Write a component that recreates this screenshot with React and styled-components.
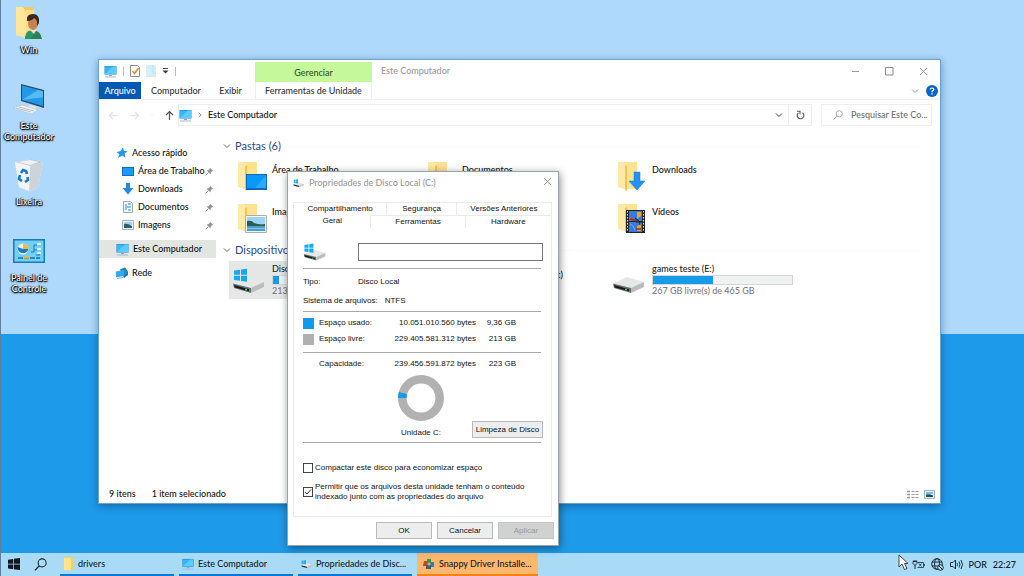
import React from 'react';
import styled, { createGlobalStyle, css } from 'styled-components';

const GlobalStyle = createGlobalStyle`
  * {
    box-sizing: border-box;
  }

  body {
    margin: 0;
    font-family: Lato, 'Noto Sans', sans-serif;
    font-size: 9px;
    font-weight: 500;
    line-height: 12px;
    color: #111;
  }

  button, input {
    font: inherit;
    color: inherit;
    margin: 0;
  }

  button {
    padding: 0;
    border: none;
    background: none;
  }

  a {
    color: inherit;
    text-decoration: none;
  }

  svg {
    display: block;
    flex: none;
  }
`;

const Screen = styled.div`
  position: relative;
  min-height: 100vh;
  display: flex;
  flex-direction: column;
  overflow: hidden;
  background: linear-gradient(#afd8fd 58%, #1e9aea 58%);
  border-left: 1px solid #5f7f9c;
`;

const DesktopIcons = styled.nav`
  flex: 1;
  display: flex;
  flex-direction: column;
  width: 56px;
  padding-top: 5px;
`;

const DesktopItem = styled.a`
  height: 76px;
  display: flex;
  flex-direction: column;
  align-items: center;
  gap: 3px;
  color: #fff;
  font-size: 9px;
  font-weight: 500;
  line-height: 11px;
  text-align: center;
  text-shadow: 0 0 1px #000, 1px 1px 1px #000, -1px 0 1px #222, 0 1px 2px #000;
`;

const DesktopPicture = styled.span`
  height: 36px;
  display: flex;
  align-items: center;
`;

/* ---------- explorer window ---------- */

const Explorer = styled.main`
  position: absolute;
  top: 59px;
  left: 97px;
  right: 83px;
  bottom: 72px;
  display: flex;
  flex-direction: column;
  background: #fff;
  border: 1px solid #6aa3cf;
  box-shadow: 0 2px 8px rgba(0, 30, 70, 0.4);
`;

const TitleBar = styled.header`
  height: 22px;
  display: flex;
  align-items: center;
  color: #999;
`;

const QuickAccess = styled.div`
  width: 156px;
  display: flex;
  align-items: center;
  gap: 6px;
  padding-left: 5px;
`;

const Divider = styled.span`
  width: 1px;
  height: 9px;
  background: #bbb;
`;

const ContextTab = styled.div`
  width: 117px;
  height: 20px;
  align-self: flex-end;
  margin-right: 9px;
  background: #c5f79b;
  color: #31502a;
  line-height: 22px;
  text-align: center;
`;

const WindowTitle = styled.span`
  flex: 1;
`;

const WindowButton = styled.button`
  width: 34px;
  height: 22px;
  display: flex;
  align-items: center;
  justify-content: center;
`;

const RibbonTabs = styled.nav`
  height: 18px;
  display: flex;
  border-bottom: 1px solid #eef0f1;
`;

const RibbonTab = styled.a`
  width: ${props => props.$width}px;
  line-height: 18px;
  text-align: center;
  color: #333;

  ${props => props.$file && css`
    margin-right: 5px;
    height: 17px;
    background: #0058b5;
    color: #fff;
  `}

  ${props => props.$context && css`
    border: solid #eee;
    border-width: 0 1px;
  `}
`;

const RibbonTools = styled.div`
  flex: 1;
  display: flex;
  align-items: center;
  justify-content: flex-end;
  gap: 7px;
  padding-right: 2px;
`;

const AddressRow = styled.div`
  height: 30px;
  display: flex;
  align-items: center;
  padding-right: 8px;
`;

const History = styled.div`
  width: 79px;
  display: flex;
  align-items: center;
  gap: 10px;
  padding-left: 9px;
`;

const AddressBox = styled.div`
  flex: 1;
  height: 22px;
  display: flex;
  align-items: center;
  gap: 5px;
  border: 1px solid #eee;
`;

const AddressText = styled.span`
  flex: 1;
`;

const RefreshButton = styled.button`
  width: 23px;
  height: 20px;
  display: flex;
  align-items: center;
  justify-content: center;
  border-left: 1px solid #eee;
`;

const SearchBox = styled.label`
  width: 111px;
  height: 22px;
  margin-left: 9px;
  display: flex;
  align-items: center;
  gap: 8px;
  padding-left: 11px;
  border: 1px solid #eee;

  input {
    flex: 1;
    min-width: 0;
    padding: 0;
    border: none;
    outline: none;
    background: none;
  }

  input::placeholder {
    color: #707070;
    opacity: 1;
  }
`;

const Body = styled.div`
  flex: 1;
  display: flex;
`;

const SidePane = styled.nav`
  width: 117px;
  padding-top: 14px;
`;

const SideItem = styled.a`
  height: 18px;
  display: flex;
  align-items: center;
  gap: 4px;
  padding-left: ${props => (props.$nested ? 23 : 17)}px;
  margin-top: ${props => (props.$section ? 6 : 0)}px;
  background: ${props => (props.$active ? '#e3e5e3' : 'transparent')};
  white-space: nowrap;
`;

const SideLabel = styled.span`
  width: 63px;
`;

const Content = styled.section`
  flex: 1;
  min-width: 0;
  padding: 7px 20px 0 7px;
`;

const GroupTitle = styled.h2`
  height: 18px;
  margin: 0;
  display: flex;
  align-items: center;
  gap: 4px;
  color: #2b4a86;
  font-size: 11px;
  font-weight: 400;

  &::after {
    content: '';
    flex: 1;
    height: 1px;
    margin-left: 4px;
    background: #f9fafa;
  }
`;

const TileGrid = styled.div`
  display: grid;
  grid-template-columns: repeat(auto-fill, 190px);
  grid-auto-rows: 42px;
  margin: 2px 0 0 6px;
`;

const Tile = styled.a`
  display: flex;
  gap: 4px;
  padding: ${props => (props.$drive ? '2px 0 0 3px' : '4px 0 0 8px')};
  height: 38px;
  line-height: ${props => (props.$drive ? 24 : 18)}px;
  white-space: nowrap;
  background: ${props => (props.$active ? '#e5e7e6' : 'transparent')};
`;

const TileIcon = styled.span`
  width: ${props => (props.$drive ? 36 : 31)}px;
`;

const DriveInfo = styled.span`
  display: flex;
  flex-direction: column;
  width: 141px;
  color: #7b7b7b;
  line-height: 12px;
`;

const DriveName = styled.span`
  color: #222;
`;

const UsageBar = styled.span`
  height: 10px;
  background: #f0f2f2;
  border: 1px solid #d5d7d7;
`;

const UsageFill = styled.span`
  display: block;
  height: 8px;
  background: #189be6;
`;

const StatusBar = styled.footer`
  height: 18px;
  display: flex;
  align-items: center;
  gap: 16px;
  padding: 0 5px 0 10px;
`;

const ViewButtons = styled.div`
  flex: 1;
  display: flex;
  justify-content: flex-end;
  gap: 5px;
`;

/* ---------- properties dialog ---------- */

const Dialog = styled.section`
  position: absolute;
  top: 171px;
  left: 286px;
  width: 272px;
  display: flex;
  flex-direction: column;
  background: #fff;
  border: 1px solid #96a5ad;
  box-shadow: 1px 2px 8px rgba(0, 0, 0, 0.45);
  font-family: 'Liberation Sans', Arial, sans-serif;
  font-size: 8px;
  color: #111;
`;

const DialogTitle = styled.header`
  height: 30px;
  display: flex;
  align-items: flex-start;
  gap: 5px;
  padding: 5px 6px 0 5px;
  font-family: Lato, 'Noto Sans', sans-serif;
  font-size: 9px;
  color: #999;
`;

const TabRow = styled.div`
  height: 13px;
  display: flex;
  margin: 0 6px 0 5px;
`;

const Tab = styled.button`
  flex: ${props => props.$grow};
  border: solid #eaeaea;
  border-width: 1px 1px 0 0;
  line-height: 12px;

  &:first-child {
    border-left-width: 1px;
  }
`;

const ActiveTab = styled(Tab)`
  border-top-color: #fff;
  padding-bottom: 3px;
  line-height: 8px;
`;

const TabPanel = styled.div`
  margin: 0 6px 0 5px;
  padding: 14px 8px 0 9px;
  height: 289px;
  border: 1px solid #eaeaea;
  border-top: none;
`;

const NameRow = styled.div`
  display: flex;
  align-items: center;
  gap: 32px;
  margin-bottom: 7px;

  input {
    flex: 1;
    min-width: 0;
    height: 18px;
    border: 1px solid #777;
    background: #fff;
  }
`;

const Rule = styled.hr`
  height: 1px;
  margin: 0 2px 0 0;
  border: none;
  background: #a9a9a9;
`;

const Facts = styled.dl`
  margin: 0;
  padding: 3px 0 1px;
`;

const Fact = styled.div`
  height: 19px;
  display: flex;
  align-items: center;
  gap: 7px;

  dt {
    min-width: 48px;
  }

  dd {
    margin: 0;
  }
`;

const SpaceTable = styled.table`
  width: 213px;
  margin: ${props => props.$margin};
  border-collapse: collapse;
  table-layout: fixed;

  td, th {
    height: 16px;
    padding: 0;
    font-weight: 400;
    text-align: right;
    white-space: nowrap;
  }

  th {
    text-align: left;
  }
`;

const Swatch = styled.span`
  display: block;
  width: 11px;
  height: 11px;
  background: ${props => props.$color};
`;

const ChartArea = styled.div`
  display: grid;
  grid-template-columns: 82px 72px 1fr;
  grid-template-rows: 46px 20px;
  justify-items: center;
  margin: 3px 0 1px;

  svg {
    grid-column: 2;
  }
`;

const ChartLabel = styled.span`
  grid-column: 2;
  grid-row: 2;
  line-height: 24px;
`;

const PushButton = styled.button`
  width: ${props => props.$width}px;
  height: 17px;
  border: 1px solid #b9b9b9;
  background: #eceeed;
  white-space: nowrap;

  &:disabled {
    background: #d0d2d1;
    border-color: #c4c4c4;
    color: #999;
  }
`;

const CleanupCell = styled.div`
  grid-column: 3;
  grid-row: 2;
  justify-self: end;
`;

const Option = styled.label`
  display: flex;
  align-items: center;
  gap: 2px;
  margin-top: ${props => props.$gap}px;
  line-height: 10px;

  input {
    appearance: none;
    flex: none;
    width: 10px;
    height: 10px;
    border: 1px solid #444;
    background: #fff;
  }

  input:checked {
    background: #fff url("data:image/svg+xml,%3Csvg xmlns='http://www.w3.org/2000/svg' viewBox='0 0 8 8'%3E%3Cpath d='M1 4l2 2 4-4.500' fill='none' stroke='%23333'/%3E%3C/svg%3E");
  }
`;

const DialogButtons = styled.div`
  display: flex;
  justify-content: flex-end;
  gap: 5px;
  padding: 5px 4px 6px;
`;

/* ---------- taskbar ---------- */

const Taskbar = styled.footer`
  height: 23px;
  display: flex;
  align-items: center;
  padding: 0 8px 0 7px;
  background: #a9dbf6;
  color: #10202a;
`;

const StartArea = styled.div`
  width: 52px;
  display: flex;
  gap: 14px;
`;

const TaskButtons = styled.div`
  flex: 1;
  display: flex;
  gap: 5px;
`;

const TaskButton = styled.button`
  width: ${props => (props.$alert ? 121 : 114)}px;
  height: 23px;
  display: flex;
  align-items: center;
  gap: 4px;
  padding-left: ${props => (props.$alert ? 6 : 3)}px;
  border-bottom: 2px solid ${props => (props.$alert ? '#f58016' : '#0a78dc')};
  background: ${props => (props.$alert ? '#ffb76c' : 'transparent')};
  white-space: nowrap;
`;

const Tray = styled.div`
  display: flex;
  align-items: center;
  gap: 6px;
`;

const Cursor = styled.svg`
  position: absolute;
  right: 115px;
  bottom: 5px;
`;

/* ---------- icons ---------- */

const Monitor = ({ size = 13 }) => (
  <svg width={size} height={size} viewBox="0 0 13 13">
    <path d="M0.500 1h12v8.500h-12z" fill="#1684d4" />
    <path d="M1 1.500h11v7.500H1z" fill="#38b6fa" />
    <path d="M1 9L9 1.500h3V9z" fill="#5accff" />
    <path d="M5 10h3v1H5z" fill="#8aa4b4" />
    <path d="M1 11.500h11v1H1z" fill="#9cbccf" />
  </svg>
);

const Chevron = ({ color = '#666', turn = 0, size = 8 }) => (
  <svg width={size} height={size} viewBox="0 0 8 8">
    <path d="M1 2.500l3 3 3-3" fill="none" stroke={color} transform={`rotate(${turn} 4 4)`} />
  </svg>
);

const Arrow = ({ color, turn = 0 }) => (
  <svg width="11" height="11" viewBox="0 0 11 11">
    <path d="M10 5.500H1.500M5 2L1.500 5.500 5 9" fill="none" stroke={color} strokeWidth="1.2" transform={`rotate(${turn} 5.500 5.500)`} />
  </svg>
);

const Cross = ({ size = 9 }) => (
  <svg width={size} height={size} viewBox="0 0 9 9">
    <path d="M1 1l7 7M8 1L1 8" fill="none" stroke="#888" strokeWidth="0.9" />
  </svg>
);

const Glass = ({ size, color }) => (
  <svg width={size} height={size} viewBox="0 0 12 12">
    <circle cx="7.500" cy="4.500" r="3.700" fill="none" stroke={color} />
    <path d="M5 7.200L0.800 11.400" stroke={color} strokeWidth="1.200" />
  </svg>
);

const WinLogo = ({ size = 12, color = '#101820' }) => (
  <svg width={size} height={size} viewBox="0 0 12 12">
    <path d="M0 1.700l5.300-.8v4.800H0zM6 .8L12 0v5.700H6zM0 6.400h5.300v4.800L0 10.400zM6 6.400h6V12l-6-.8z" fill={color} />
  </svg>
);

const DriveShape = ({ windows, width, height }) => (
  <svg width={width} height={height} viewBox="0 0 33 26">
    <path d="M1 16.500L15 10l17 5-13 6.500z" fill="#e6e8e8" />
    <path d="M1 16.500l18 4.500v5L2 21z" fill="#6b7071" />
    <path d="M19 21l13-6v5l-13 6z" fill="#b9bdbe" />
    <path d="M2 18l15 4.200v2L3 20.500z" fill="#15191a" />
    <circle cx="14" cy="22.500" r="1" fill="#3be070" />
    {windows && <path d="M2 3.500l6-.8v5H2zM9 2.600l6-.9v6H9zM2 8.700h6v5L2 13zM9 8.700h6v6L9 13.900z" fill="#16a9f2" />}
  </svg>
);

const Folder = ({ kind }) => (
  <svg width="31" height="31" viewBox="0 0 31 31">
    <path d="M8 1h12v26H8z" fill="#f5cf63" />
    <path d="M9 1h11v27H9z" fill="#ffe391" />
    <path d="M1 1h7l2 4v24L1 26z" fill="#ffe9a6" />
    <path d="M8 5l2-1v26l-2-1z" fill="#f1c550" />
    {kind === 'desktop' && (
      <>
        <path d="M9 13h21v16H9z" fill="#1068c0" />
        <path d="M10 14h19v13H10z" fill="#0a98fb" />
        <path d="M18 27l11-13v13z" fill="#2ba8ff" />
      </>
    )}
    {kind === 'documents' && (
      <>
        <path d="M11 11h17v19H11z" fill="#f5f8fb" stroke="#98a7b5" />
        <path d="M14 16h11M14 20h11M14 24h11" stroke="#3d8ad0" />
      </>
    )}
    {kind === 'downloads' && <path d="M17 11h6v9h5l-8 9-8-9h5z" fill="#2492f2" stroke="#1674cc" strokeWidth="0.500" />}
    {kind === 'images' && (
      <>
        <path d="M8.500 12.500h21v17h-21z" fill="#f3f5f6" stroke="#a5aeb2" />
        <path d="M10 14h18v7H10z" fill="#9fd3f5" />
        <path d="M10 18q5-1 7 2 5 2 11 1v3H10z" fill="#2a5c50" />
        <path d="M10 23h18v5H10z" fill="#4b9fce" />
        <path d="M10 25h18v1H10z" fill="#8cc6e2" />
      </>
    )}
    {kind === 'videos' && (
      <>
        <path d="M9 7h19v23H9z" fill="#252525" />
        <path d="M12 8h13v10H12zM12 19h13v10H12z" fill="#3978dc" />
        <path d="M10.500 8v21M26.500 8v21" stroke="#eee" strokeDasharray="1.500 1.500" />
        <path d="M20 9h4v4l-4 3zM20 23l4-2v7h-4z" fill="#e8a22f" />
        <path d="M12 14l5 2-5 1z" fill="#e8622f" />
        <path d="M13 16l9 2M19 26h5" stroke="#982d21" strokeWidth="1.500" />
        <path d="M18 15l4 3 1 4M19 19h6" stroke="#142d24" fill="none" />
        <path d="M13 21q3 0 5 6" stroke="#69b5f4" fill="none" />
      </>
    )}
  </svg>
);

const SideIcon = ({ kind }) => (
  <svg width="12" height="12" viewBox="0 0 12 12">
    {kind === 'star' && <path d="M7 .500l.9 3.300 3.600.4-2.900 2.300.9 4.200L6.300 8.600 2 11l1.500-3.800L.500 5l3.800-.7z" fill="#2196eb" />}
    {kind === 'desktop' && (
      <>
        <path d="M0 2h12v9H0z" fill="#1269c0" />
        <path d="M1 3h10v7H1z" fill="#159dfd" />
      </>
    )}
    {kind === 'downloads' && <path d="M4 0h4v5h3.500L6 11.500.500 5H4z" fill="#2288e4" />}
    {kind === 'documents' && (
      <>
        <path d="M1.500.500h7l2 2v9h-9z" fill="#f2f7fa" stroke="#98a8b2" />
        <path d="M3 4h2M6 3h3M3 6h6M3 8h2M6 9h3" stroke="#298bd2" strokeWidth="1.200" />
      </>
    )}
    {kind === 'images' && (
      <>
        <path d="M.500 1.500h11v9H.500z" fill="#eef4f6" stroke="#a4b0b5" />
        <path d="M2 3h8v3H2z" fill="#9ed3f2" />
        <path d="M2 5q3-1 8 2v2H2z" fill="#28606d" />
      </>
    )}
    {kind === 'network' && (
      <>
        <path d="M4 2.500L9 .500l3 4V8L8 11z" fill="#1677b5" />
        <path d="M0 4.500l8-1.500v6l-8 1.500z" fill="#33a9ee" />
        <path d="M8 2l3.500 3.500L8 9z" fill="#1f8fd6" />
        <path d="M1 11.500l6-1" stroke="#8fb6cc" />
      </>
    )}
  </svg>
);

const Pin = () => (
  <svg width="9" height="9" viewBox="0 0 9 9">
    <path d="M5 .700L8.300 4 7 4.300 5.700 5.800 5.500 7.500 1.500 3.500l1.700-.2 1.500-1.300z" fill="#8d989d" />
    <path d="M3.500 5.500L.700 8.300" stroke="#8d989d" />
  </svg>
);

const UserFolder = () => (
  <svg width="28" height="34" viewBox="0 0 28 34">
    <path d="M7 1h12v26H7z" fill="#f3cb62" />
    <path d="M1 1h7l3 5v26L1 29z" fill="#ffe69a" />
    <path d="M11 4h8v24h-8z" fill="#ffdf84" />
    <path d="M10 33q1-8 8-9 8 1 9 9z" fill="#2e7f52" />
    <path d="M10 31q2-8 7-6l2 3-4 5h-5z" fill="#25996b" />
    <path d="M14 23l5 5 3-5z" fill="#efe3d0" />
    <ellipse cx="18" cy="17" rx="5" ry="7" fill="#c98254" />
    <path d="M12 15q-1-7 6-7 7 0 6 9l-2 3q1-6-3-8-2 3-7 3z" fill="#3c271b" />
  </svg>
);

const BigComputer = () => (
  <svg width="34" height="33" viewBox="0 0 34 33">
    <path d="M9 1l23 6v18L9 18z" fill="#33485a" />
    <path d="M10 2.500l21 5.500v15L10 17z" fill="#2199eb" />
    <path d="M10 17L26 7l5 1.200v6z" fill="#55baf5" />
    <path d="M17 22l8 2-3 3-7-2z" fill="#dfe8ed" />
    <path d="M1 25l9-3 16 5-7 4z" fill="#f1f4f5" stroke="#aab7c0" strokeWidth="0.500" />
    <path d="M4 25l15 4M7 24l15 4" stroke="#b5bfc5" />
  </svg>
);

const RecycleBin = () => (
  <svg width="30" height="34" viewBox="0 0 30 34">
    <path d="M1 4l17-3 11 3-5 26-9 3-10-4z" fill="#e9edf0" />
    <path d="M1 4l15 4 13-4-11-3z" fill="#bdc7ce" />
    <path d="M4 4l12-2 9 2-9 3z" fill="#eef2f4" />
    <path d="M16 8l13-4-5 26-9 3z" fill="#cdd4d9" />
    <path d="M1 4l15 4-1 25-10-4z" fill="#f2f4f6" />
    <path d="M7 15l2-3 3 1 1 3M13.500 19l.500 3-3 2M8 23l-3-2 1-4" fill="none" stroke="#1678d1" strokeWidth="2.600" />
  </svg>
);

const ControlPanel = () => (
  <svg width="32" height="24" viewBox="0 0 32 24">
    <path d="M0 0h32v24H0z" fill="#157cba" />
    <path d="M1.500 1.500h29v21h-29z" fill="#73cff5" />
    <circle cx="10" cy="10" r="5.500" fill="#e9f6fd" />
    <path d="M10 10V4.500A5.500 5.500 0 0115.500 10z" fill="#f8b52d" />
    <path d="M10 10h5.500A5.500 5.500 0 014.700 8z" fill="#1a7cc9" />
    <path d="M18 13h3V6h3M21 11h3M23 16h4" stroke="#137bc0" fill="none" />
    <path d="M24 5h4M24 10h4M24 14h4" stroke="#d8f1fc" strokeWidth="2" />
    <path d="M5 19h22" stroke="#0c75b6" strokeWidth="1.500" strokeDasharray="5 1" />
    <path d="M11 18.500h5" stroke="#ffb02c" strokeWidth="2" />
  </svg>
);

const desktopItems = [
  { label: 'Win', icon: <UserFolder /> },
  { label: 'Este Computador', icon: <BigComputer /> },
  { label: 'Lixeira', icon: <RecycleBin /> },
  { label: 'Painel de Controle', icon: <ControlPanel /> },
];

const quickLinks = [
  { label: 'Área de Trabalho', kind: 'desktop' },
  { label: 'Downloads', kind: 'downloads' },
  { label: 'Documentos', kind: 'documents' },
  { label: 'Imagens', kind: 'images' },
];

const folders = [
  { label: 'Área de Trabalho', kind: 'desktop' },
  { label: 'Documentos', kind: 'documents' },
  { label: 'Downloads', kind: 'downloads' },
  { label: 'Imagens', kind: 'images' },
  { label: '', kind: 'music' },
  { label: 'Vídeos', kind: 'videos' },
];

function ExplorerWindow() {
  return (
    <Explorer>
      <TitleBar>
        <QuickAccess>
          <Monitor />
          <Divider />
          <svg width="10" height="12" viewBox="0 0 10 12">
            <path d="M.500.500h7l2 2v9h-9z" fill="#fff" stroke="#8a8f93" />
            <path d="M2.500 6l2 2.500L8.500 3" fill="none" stroke="#e8862f" strokeWidth="1.500" />
          </svg>
          <svg width="10" height="12" viewBox="0 0 10 12">
            <path d="M0 0h9l1 2v10H0z" fill="#d3effa" />
            <path d="M7 0v8h3" fill="none" stroke="#b6e2f3" />
          </svg>
          <svg width="7" height="8" viewBox="0 0 7 8">
            <path d="M1 1.500h5" stroke="#444" />
            <path d="M.500 3.500h6l-3 3z" fill="#333" />
          </svg>
          <Divider />
        </QuickAccess>
        <ContextTab>Gerenciar</ContextTab>
        <WindowTitle>Este Computador</WindowTitle>
        <WindowButton aria-label="Minimizar">
          <svg width="9" height="9" viewBox="0 0 9 9"><path d="M1 4.500h7" stroke="#999" /></svg>
        </WindowButton>
        <WindowButton aria-label="Maximizar">
          <svg width="9" height="9" viewBox="0 0 9 9"><path d="M.500.500h7.500v7.500H.500z" fill="none" stroke="#888" /></svg>
        </WindowButton>
        <WindowButton aria-label="Fechar"><Cross /></WindowButton>
      </TitleBar>
      <RibbonTabs>
        <RibbonTab href="#arquivo" $width={42} $file>Arquivo</RibbonTab>
        <RibbonTab href="#computador" $width={60}>Computador</RibbonTab>
        <RibbonTab href="#exibir" $width={49}>Exibir</RibbonTab>
        <RibbonTab href="#ferramentas" $width={117} $context>Ferramentas de Unidade</RibbonTab>
        <RibbonTools>
          <Chevron color="#999" />
          <svg width="12" height="12" viewBox="0 0 12 12">
            <circle cx="6" cy="6" r="6" fill="#0864cb" />
            <path d="M4.200 4.500Q4.300 3 6 3t1.800 1.400Q7.800 5.300 6 6.300V7.300" fill="none" stroke="#fff" strokeWidth="1.200" />
            <circle cx="6" cy="9" r="0.800" fill="#fff" />
          </svg>
        </RibbonTools>
      </RibbonTabs>
      <AddressRow>
        <History>
          <Arrow color="#e2e2e2" />
          <Arrow color="#e2e2e2" turn={180} />
          <Chevron color="#ddd" size={4} />
          <Arrow color="#555" turn={90} />
        </History>
        <AddressBox>
          <Monitor />
          <Chevron turn={-90} size={6} />
          <AddressText>Este Computador</AddressText>
          <Chevron color="#444" />
          <RefreshButton aria-label="Atualizar">
            <svg width="9" height="10" viewBox="0 0 9 10">
              <path d="M6.500 2.800A3.300 3.300 0 112.300 3M1 1.300h3v3" fill="none" stroke="#555" strokeWidth="1.100" />
            </svg>
          </RefreshButton>
        </AddressBox>
        <SearchBox>
          <Glass size={10} color="#999" />
          <input type="text" placeholder="Pesquisar Este Co..." aria-label="Pesquisar" />
        </SearchBox>
      </AddressRow>
      <Body>
        <SidePane>
          <SideItem href="#rapido"><SideIcon kind="star" />Acesso rápido</SideItem>
          {quickLinks.map(link => (
            <SideItem key={link.label} href="#pasta" $nested>
              <SideIcon kind={link.kind} />
              <SideLabel>{link.label}</SideLabel>
              <Pin />
            </SideItem>
          ))}
          <SideItem href="#computador" $section $active><Monitor />Este Computador</SideItem>
          <SideItem href="#rede" $section><SideIcon kind="network" />Rede</SideItem>
        </SidePane>
        <Content>
          <GroupTitle><Chevron />Pastas (6)</GroupTitle>
          <TileGrid>
            {folders.map(folder => (
              <Tile key={folder.kind} href="#pasta">
                <TileIcon><Folder kind={folder.kind} /></TileIcon>
                {folder.label}
              </Tile>
            ))}
          </TileGrid>
          <GroupTitle><Chevron />Dispositivos</GroupTitle>
          <TileGrid>
            <Tile href="#c" $drive $active>
              <TileIcon $drive><DriveShape windows width={33} height={34} /></TileIcon>
              <DriveInfo>
                <DriveName>Disco</DriveName>
                <UsageBar><UsageFill style={{ width: '4%' }} /></UsageBar>
                213 GB
              </DriveInfo>
            </Tile>
            <Tile href="#d" $drive>
              <TileIcon $drive />
              Unidade de BD-ROM (D:)
            </Tile>
            <Tile href="#e" $drive>
              <TileIcon $drive><DriveShape width={33} height={34} /></TileIcon>
              <DriveInfo>
                <DriveName>games teste (E:)</DriveName>
                <UsageBar><UsageFill style={{ width: '43%' }} /></UsageBar>
                267 GB livre(s) de 465 GB
              </DriveInfo>
            </Tile>
          </TileGrid>
        </Content>
      </Body>
      <StatusBar>
        <span>9 itens</span>
        <span>1 item selecionado</span>
        <ViewButtons>
          <svg width="12" height="9" viewBox="0 0 12 9">
            <path d="M0 1.500h3M0 4.500h3M0 7.500h3" stroke="#999" strokeWidth="1.500" />
            <path d="M4.500 1.500H12M4.500 4.500H12M4.500 7.500H12" stroke="#999" strokeDasharray="3 1" />
          </svg>
          <svg width="11" height="9" viewBox="0 0 11 9">
            <path d="M.500.500h10v8H.500z" fill="#e2f2fb" stroke="#9db5c1" />
            <path d="M2 2h7v2H2z" fill="#6dc3ec" />
            <path d="M2 4.500q3-1 7 1V7H2z" fill="#234a57" />
          </svg>
        </ViewButtons>
      </StatusBar>
    </Explorer>
  );
}

function PropertiesDialog() {
  return (
    <Dialog role="dialog" aria-label="Propriedades de Disco Local (C:)">
      <DialogTitle>
        <DriveShape windows width={11} height={12} />
        <WindowTitle>Propriedades de Disco Local (C:)</WindowTitle>
        <button aria-label="Fechar"><Cross size={9} /></button>
      </DialogTitle>
      <TabRow>
        <Tab $grow={93}>Compartilhamento</Tab>
        <Tab $grow={69}>Segurança</Tab>
        <Tab $grow={95}>Versões Anteriores</Tab>
      </TabRow>
      <TabRow>
        <ActiveTab $grow={77}>Geral</ActiveTab>
        <Tab $grow={94}>Ferramentas</Tab>
        <Tab $grow={86}>Hardware</Tab>
      </TabRow>
      <TabPanel>
        <NameRow>
          <DriveShape windows width={23} height={19} />
          <input type="text" aria-label="Nome do volume" />
        </NameRow>
        <Rule />
        <Facts>
          <Fact><dt>Tipo:</dt><dd>Disco Local</dd></Fact>
          <Fact><dt>Sistema de arquivos:</dt><dd>NTFS</dd></Fact>
        </Facts>
        <Rule />
        <SpaceTable $margin="3px 0 5px">
          <colgroup><col width="16" /><col width="60" /><col /><col width="40" /></colgroup>
          <tbody>
            <tr>
              <td><Swatch $color="#109aeb" /></td>
              <th scope="row">Espaço usado:</th>
              <td>10.051.010.560 bytes</td>
              <td>9,36 GB</td>
            </tr>
            <tr>
              <td><Swatch $color="#b0b0b0" /></td>
              <th scope="row">Espaço livre:</th>
              <td>229.405.581.312 bytes</td>
              <td>213 GB</td>
            </tr>
          </tbody>
        </SpaceTable>
        <Rule />
        <SpaceTable $margin="3px 0 0">
          <colgroup><col width="16" /><col width="60" /><col /><col width="40" /></colgroup>
          <tbody>
            <tr>
              <td />
              <th scope="row">Capacidade:</th>
              <td>239.456.591.872 bytes</td>
              <td>223 GB</td>
            </tr>
          </tbody>
        </SpaceTable>
        <ChartArea>
          <svg width="46" height="46" viewBox="0 0 46 46">
            <circle cx="23" cy="23" r="18.700" fill="none" stroke="#b1b1b1" strokeWidth="8.600" />
            <circle cx="23" cy="23" r="18.700" fill="none" stroke="#109aeb" strokeWidth="8.600" strokeDasharray="5 200" transform="rotate(180 23 23)" />
          </svg>
          <ChartLabel>Unidade C:</ChartLabel>
          <CleanupCell><PushButton $width={71}>Limpeza de Disco</PushButton></CleanupCell>
        </ChartArea>
        <Rule />
        <Option $gap={20}>
          <input type="checkbox" />
          <span>Compactar este disco para economizar espaço</span>
        </Option>
        <Option $gap={9}>
          <input type="checkbox" defaultChecked />
          <span>Permitir que os arquivos desta unidade tenham o conteúdo indexado junto com as propriedades do arquivo</span>
        </Option>
      </TabPanel>
      <DialogButtons>
        <PushButton $width={56}>OK</PushButton>
        <PushButton $width={56}>Cancelar</PushButton>
        <PushButton $width={56} disabled>Aplicar</PushButton>
      </DialogButtons>
    </Dialog>
  );
}

function BottomBar() {
  return (
    <Taskbar>
      <StartArea>
        <WinLogo />
        <Glass size={13} color="#15252e" />
      </StartArea>
      <TaskButtons>
        <TaskButton>
          <svg width="11" height="13" viewBox="0 0 11 13">
            <path d="M1 0h8l1 2v11H1z" fill="#f4cf60" />
            <path d="M1 1h6l1 2v10H1z" fill="#ffe58b" />
          </svg>
          drivers
        </TaskButton>
        <TaskButton><Monitor size={12} />Este Computador</TaskButton>
        <TaskButton><DriveShape windows width={11} height={12} />Propriedades de Disc...</TaskButton>
        <TaskButton $alert>
          <svg width="12" height="12" viewBox="0 0 12 12">
            <path d="M1 3h4v5H0z" fill="#c8442d" />
            <path d="M4 1h4v5H4z" fill="#2f9a4b" />
            <path d="M7 4h4v5H7z" fill="#1f84be" />
            <path d="M3 7h5v4H3z" fill="#395e78" />
            <circle cx="6" cy="6" r="1.500" fill="#f2b13b" />
          </svg>
          Snappy Driver Installe...
        </TaskButton>
      </TaskButtons>
      <Tray>
        <svg width="13" height="10" viewBox="0 0 13 10">
          <path d="M1 1.500h4v2L3.500 5h-1L1 3.500zM3 5v4M2 0v1.500M4 0v1.500" fill="none" stroke="#1b2b34" />
          <path d="M5.500 2.500h6v5h-6M12.500 4v2M7 3.500l2.500 3M9.500 3.500l-2.500 3" fill="none" stroke="#1b2b34" strokeWidth="0.800" />
        </svg>
        <svg width="13" height="13" viewBox="0 0 13 13">
          <circle cx="6" cy="6" r="5.300" fill="none" stroke="#1b2b34" />
          <ellipse cx="6" cy="6" rx="2.400" ry="5.300" fill="none" stroke="#1b2b34" />
          <path d="M1 4h10M1 8h10" stroke="#1b2b34" />
          <circle cx="9.500" cy="9.500" r="2.800" fill="#a9dbf6" stroke="#1b2b34" />
          <path d="M7.700 7.700l3.600 3.600" stroke="#1b2b34" />
        </svg>
        <svg width="13" height="11" viewBox="0 0 13 11">
          <path d="M.500 3.500H3L5.500 1v9L3 7.500H.500z" fill="none" stroke="#1b2b34" />
          <path d="M7 4q1 1.500 0 3M9 2.500q2 3 0 6M11 1q3 4.500 0 9" fill="none" stroke="#1b2b34" />
        </svg>
        <span>POR</span>
        <span>22:27</span>
      </Tray>
    </Taskbar>
  );
}

function App() {
  return (
    <Screen>
      <GlobalStyle />
      <DesktopIcons>
        {desktopItems.map(item => (
          <DesktopItem key={item.label} href="#abrir">
            <DesktopPicture>{item.icon}</DesktopPicture>
            {item.label}
          </DesktopItem>
        ))}
      </DesktopIcons>
      <ExplorerWindow />
      <PropertiesDialog />
      <BottomBar />
      <Cursor width="11" height="17" viewBox="0 0 11 17">
        <path d="M1 1v12l3-3 2.500 5.500L9 14.500 6.500 9.500H10z" fill="#fff" stroke="#333" strokeWidth="0.900" />
      </Cursor>
    </Screen>
  );
}

export default App;
